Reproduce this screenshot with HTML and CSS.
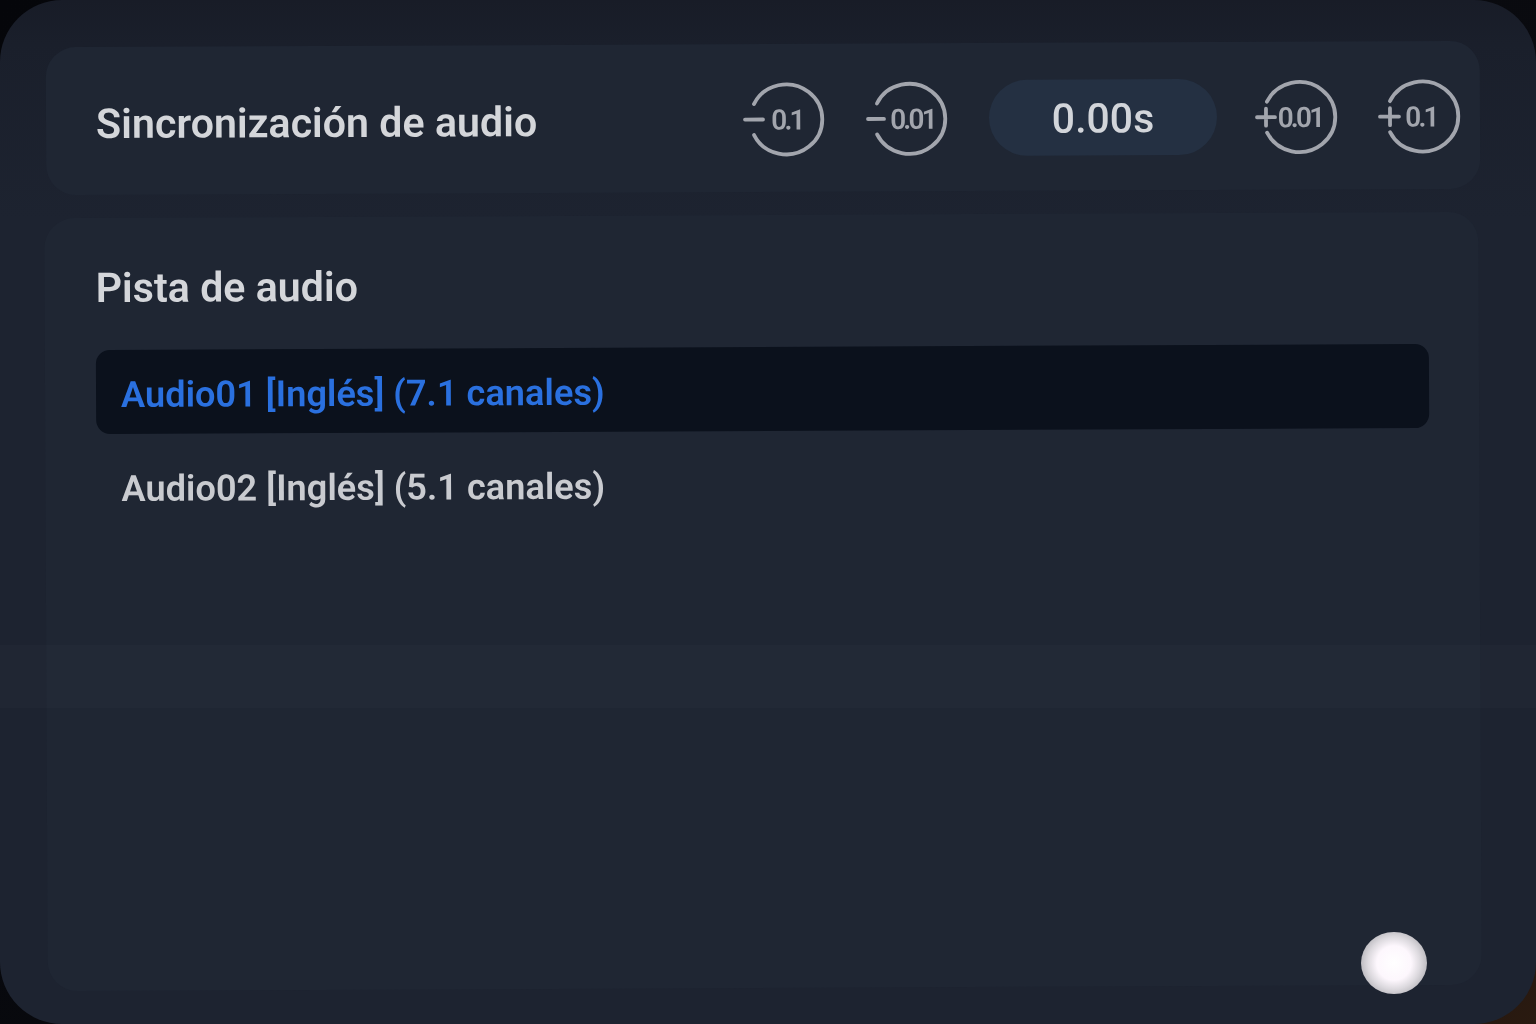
FILE: index.html
```html
<!DOCTYPE html>
<html lang="es">
<head>
<meta charset="utf-8">
<title>Audio</title>
<link rel="stylesheet" href="styles.css">
</head>
<body>
<main class="sheet">
  <section class="card sync">
    <h2 class="title">Sincronización de audio</h2>
    <div class="controls">
      <svg class="step" viewBox="0 0 84 76"><path class="ring" d="M8 23A36 35 0 1 1 8 54"/><path class="ring" d="M-1 38.5H17"/><text class="num" x="41" y="48.5" text-anchor="middle">0.1</text></svg>
      <svg class="step" viewBox="0 0 84 76"><path class="ring" d="M8 23A36 35 0 1 1 8 54"/><path class="ring" d="M-1 38.5H15"/><text class="num" x="43.5" y="48.5" text-anchor="middle">0.01</text></svg>
      <output class="value">0.00s</output>
      <svg class="step" viewBox="0 0 84 76"><path class="ring" d="M8 23A36 35 0 1 1 8 54"/><path class="ring" d="M-2 38.5H16M7 30V47"/><text class="num" x="41" y="48.5" text-anchor="middle">0.01</text></svg>
      <svg class="step" viewBox="0 0 84 76"><path class="ring" d="M8 23A36 35 0 1 1 8 54"/><path class="ring" d="M-2 38.5H17M8 30V47"/><text class="num" x="39" y="48.5" text-anchor="middle">0.1</text></svg>
    </div>
  </section>
  <section class="card tracks">
    <h2 class="title">Pista de audio</h2>
    <ul class="list">
      <li class="track selected">Audio01 [Inglés] (7.1 canales)</li>
      <li class="track">Audio02 [Inglés] (5.1 canales)</li>
    </ul>
  </section>
  <div class="band"></div>
  <div class="touch"></div>
</main>
</body>
</html>
```
FILE: styles.css
```css
* { box-sizing: border-box; }
html, body { margin: 0; height: 100%; }
body {
  width: 1536px;
  height: 1024px;
  overflow: hidden;
  background: linear-gradient(135deg, #05060a 0%, #0a0b10 70%, #2a1a10 100%);
  font-family: Roboto, "Liberation Sans", sans-serif;
}
.sheet {
  position: relative;
  width: 1536px;
  height: 1024px;
  padding: 44px 56px 36px 46px;
  display: flex;
  flex-direction: column;
  gap: 23px;
  border-radius: 62px;
  background: linear-gradient(180deg, #181c27 0, #1a1f2b 44px, #1d2330 220px);
  filter: blur(0.6px);
}
.card {
  border-radius: 30px;
  background: #1f2633;
  transform: rotate(-0.26deg);
}
.sync {
  height: 148px;
  padding: 0 14px 0 50px;
  display: flex;
  align-items: center;
  justify-content: space-between;
}
.title {
  margin: 0;
  font-size: 41.2px;
  line-height: 46px;
  font-weight: 600;
  color: #d4d6da;
}
.sync .title { margin-top: 5px; }
.controls { display: flex; align-items: center; margin-top: 2px; }
.step { width: 84px; height: 76px; margin-right: 39px; overflow: visible; }
.ring { fill: none; stroke: #a2a5ad; stroke-width: 3.8; stroke-linecap: round; }
.num { font-family: Roboto, sans-serif; font-size: 28px; font-weight: 600; letter-spacing: -2.8px; fill: #a2a5ad; }
.value {
  width: 228px;
  height: 76px;
  margin: 0 42px 0 -3px;
  border-radius: 38px;
  background: #243042;
  color: #d2d5da;
  font-size: 41px;
  font-weight: 500;
  line-height: 78px;
  text-align: center;
}
.controls .step:last-child { margin-right: 0; }
.tracks {
  flex: 1;
  padding: 47px 50px 0 51px;
}
.list { list-style: none; margin: 39px 0 0; padding: 0; display: flex; flex-direction: column; gap: 10px; }
.track {
  height: 84px;
  padding: 0 25px;
  border-radius: 14px;
  font-size: 36.2px;
  line-height: 90px;
  font-weight: 600;
  color: #c9cbd0;
}
.track.selected { background: #0b111c; color: #2a70df; }
.band {
  position: absolute;
  left: 0;
  right: 0;
  top: 645px;
  height: 63px;
  background: rgba(255, 255, 255, 0.014);
}
.touch {
  position: absolute;
  left: 1361px;
  top: 932px;
  width: 66px;
  height: 62px;
  border-radius: 50%;
  background: radial-gradient(circle, #fff 0%, #fdf7fd 38%, #dcd9de 58%, #b4b3b8 78%, rgba(120,120,128,0.6) 92%, rgba(60,60,70,0) 100%);
}
```
